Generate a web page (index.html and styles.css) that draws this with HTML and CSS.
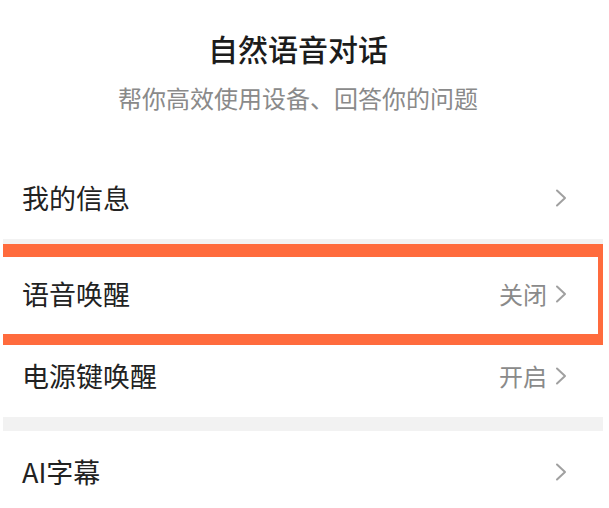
FILE: index.html
```html
<!DOCTYPE html>
<html lang="zh-CN">
<head>
<meta charset="utf-8">
<title>自然语音对话</title>
<link rel="stylesheet" href="styles.css">
</head>
<body>
<div class="screen">
  <header class="header">
    <h1 class="title">自然语音对话</h1>
    <p class="subtitle">帮你高效使用设备、回答你的问题</p>
  </header>

  <div class="row">
    <span class="label">我的信息</span>
    <span class="right"><svg class="chev" viewBox="0 0 12 18" width="12" height="18"><polyline points="2,1.5 10,9 2,16.5"/></svg></span>
  </div>

  <div class="band"></div>

  <div class="row highlighted">
    <span class="label">语音唤醒</span>
    <span class="right"><span class="value">关闭</span><svg class="chev" viewBox="0 0 12 18" width="12" height="18"><polyline points="2,1.5 10,9 2,16.5"/></svg></span>
    <div class="mark"></div>
  </div>

  <div class="row">
    <span class="label">电源键唤醒</span>
    <span class="right"><span class="value">开启</span><svg class="chev" viewBox="0 0 12 18" width="12" height="18"><polyline points="2,1.5 10,9 2,16.5"/></svg></span>
  </div>

  <div class="band"></div>

  <div class="row">
    <span class="label">AI字幕</span>
    <span class="right"><svg class="chev" viewBox="0 0 12 18" width="12" height="18"><polyline points="2,1.5 10,9 2,16.5"/></svg></span>
  </div>
</div>
</body>
</html>
```

FILE: styles.css
```css
html, body {
  margin: 0;
  padding: 0;
  background: #ffffff;
  overflow: hidden;
}

body {
  font-family: "Noto Sans CJK SC", "Noto Sans", sans-serif;
  color: #222222;
}

.screen {
  margin-left: 3px;
  width: 600px;
  display: flex;
  flex-direction: column;
}

.header {
  height: 157px;
  box-sizing: border-box;
  padding: 28px 10px 0 0;
  display: flex;
  flex-direction: column;
  align-items: center;
  gap: 14px;
}

.title {
  margin: 0;
  font-size: 30px;
  line-height: 40px;
  font-weight: 500;
  color: #1c1c1c;
}

.subtitle {
  margin: 0;
  font-size: 24px;
  line-height: 32px;
  color: #8a8a8a;
}

.row {
  height: 82px;
  box-sizing: border-box;
  padding: 0 36px 0 19px;
  display: flex;
  align-items: center;
  justify-content: space-between;
}

.highlighted {
  position: relative;
}

.label {
  font-size: 27px;
  line-height: 36px;
  color: #222222;
}

.right {
  display: flex;
  align-items: center;
  gap: 8px;
}

.value {
  font-size: 24px;
  line-height: 30px;
  color: #8a8a8a;
}

.chev {
  display: block;
  fill: none;
  stroke: #a0a0a0;
  stroke-width: 2;
  stroke-linecap: round;
  stroke-linejoin: round;
}

.band {
  height: 14px;
  background: #f2f2f2;
}

.mark {
  position: absolute;
  left: 0;
  right: 0;
  top: -9px;
  bottom: -10px;
  border-top: 13px solid #ff6b3d;
  border-bottom: 11px solid #ff6b3d;
  border-right: 5px solid #ff6b3d;
  pointer-events: none;
}
```
